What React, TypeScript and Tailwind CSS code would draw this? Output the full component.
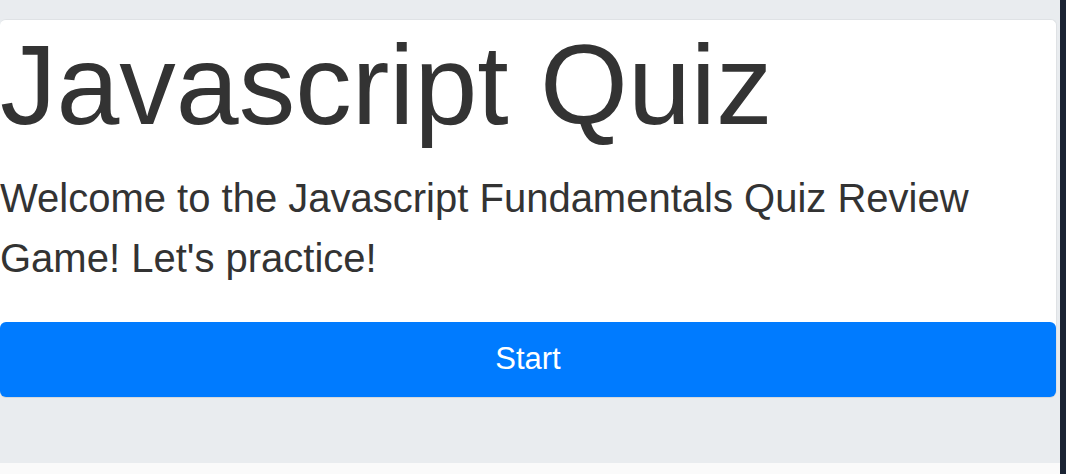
import React from 'react'

const font = { fontFamily: '"Liberation Sans", Arial, sans-serif' }

export default function App() {
  return (
    <div className="flex h-[474px] w-[1066px] overflow-hidden bg-[#1b2333]" style={font}>
      <div className="flex w-[1060px] flex-col">
        {/* page body */}
        <div className="h-[463px] bg-[#e9ecef] pt-[19px]">
          <div className="w-[1057px] rounded-md border border-l-0 border-b-0 border-[#dfe2e5] bg-white">
            <h1 className="pt-[1px] text-[113px] font-light leading-[1.15] text-[#333]">Javascript Quiz</h1>
            <p className="mt-[17px] text-[40px] font-light leading-[60px] text-[#333]">
              Welcome to the Javascript Fundamentals Quiz Review
              <br />
              Game! Let's practice!
            </p>
            <button className="mt-[34px] block h-[75px] w-full rounded-md bg-[#007bff] text-[31px] text-white shadow-[0_1px_0_#d6d9dc]">
              Start
            </button>
          </div>
        </div>
        <div className="flex-1 bg-[#fafafa]" />
      </div>
      <div className="flex-1 bg-[#1b2333]" />
    </div>
  )
}
